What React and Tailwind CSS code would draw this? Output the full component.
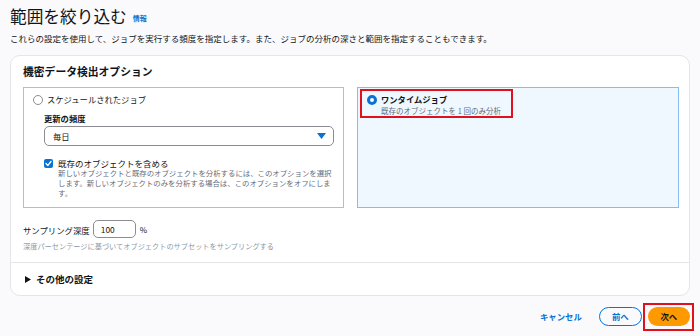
import React from "react";

const font = { fontFamily: '"Noto Sans CJK JP", "Noto Sans", sans-serif' };

export default function App() {
  return (
    <div
      className="w-[700px] h-[336px] overflow-hidden bg-[#fafafc] text-[#0f141a]"
      style={font}
    >
      {/* Header */}
      <div className="pl-[10px] h-[33px] flex items-center">
        <span className="text-[16.7px] leading-none">範囲を絞り込む</span>
        <span className="ml-[6px] mt-[4px] text-[7px] font-bold text-[#0972d3]">情報</span>
      </div>
      <div className="pl-[10px] h-[10px] leading-[10px] text-[8.5px] text-[#0f141a] whitespace-nowrap">
        これらの設定を使用して、ジョブを実行する頻度を指定します。また、ジョブの分析の深さと範囲を指定することもできます。
      </div>

      {/* Card */}
      <div className="mt-[12px] ml-[10px] w-[680px] h-[241px] rounded-[10px] border border-[#e4e4e9] bg-white">
        <div className="h-[31px] flex items-center pl-[12px] text-[10.8px] font-bold">
          機密データ検出オプション
        </div>

        <div className="flex pl-[12px] gap-[13px]">
          {/* Left option */}
          <div className="w-[321px] h-[121px] border border-[#b8bcc4] bg-white pl-[9px] pt-[6px]">
            <div className="h-[11px] flex items-center">
              <span className="w-[10px] h-[10px] rounded-full border border-[#8c8c94] bg-white" />
              <span className="ml-[4px] text-[8.3px] text-[#0f141a]">スケジュールされたジョブ</span>
            </div>
            <div className="ml-[11px]">
              <div className="mt-[8px] h-[11px] flex items-center text-[8.3px] font-bold">更新の頻度</div>
              <div className="mt-[2px] w-[290px] h-[20px] rounded-[5px] border border-[#8c8c94] flex items-center justify-between pl-[8px] pr-[7px]">
                <span className="text-[8.3px]">毎日</span>
                <svg width="9" height="6" viewBox="0 0 9 6">
                  <path d="M0 0 L9 0 L4.5 6 Z" fill="#0972d3" />
                </svg>
              </div>
              <div className="mt-[12px] flex">
                <span className="mt-[0.5px] w-[9px] h-[9px] rounded-[2px] bg-[#0972d3] flex items-center justify-center">
                  <svg width="7" height="7" viewBox="0 0 7 7">
                    <path d="M1 3.6 L2.9 5.4 L6 1.5" stroke="white" strokeWidth="1.4" fill="none" strokeLinecap="round" strokeLinejoin="round" />
                  </svg>
                </span>
                <div className="ml-[5px]">
                  <div className="h-[10px] leading-[10px] text-[8.5px]">既存のオブジェクトを含める</div>
                  <div className="text-[7.4px] leading-[10px] text-[#5f6b7a] whitespace-nowrap">
                    <div>新しいオブジェクトと既存のオブジェクトを分析するには、このオプションを選択</div>
                    <div>します。新しいオブジェクトのみを分析する場合は、このオプションをオフにしま</div>
                    <div>す。</div>
                  </div>
                </div>
              </div>
            </div>
          </div>

          {/* Right option */}
          <div className="relative w-[322px] h-[121px] border border-[#85bdf0] bg-[#f0f8ff] pl-[9px] pt-[6px]">
            <div className="h-[11px] flex items-center">
              <span className="w-[10px] h-[10px] rounded-full border-[3px] border-[#0972d3] bg-white" />
              <span className="ml-[4px] text-[8.3px] font-bold">ワンタイムジョブ</span>
            </div>
            <div className="ml-[14px] h-[11px] leading-[11px] text-[7.5px] text-[#5f6b7a]">
              既存のオブジェクトを 1 回のみ分析
            </div>
            <div className="absolute left-[2px] top-[1px] w-[153px] h-[29px] border-2 border-[#e0111d]" />
          </div>
        </div>

        {/* Sampling */}
        <div className="mt-[12px] pl-[12px] h-[18px] flex items-center">
          <span className="text-[8.4px] mt-[2px]">サンプリング深度</span>
          <div className="ml-[3px] w-[43px] h-[18px] rounded-[5px] border border-[#8c8c94] flex items-center pl-[7px] text-[8.4px]">
            100
          </div>
          <span className="ml-[4px] mt-[2px] text-[8px]">%</span>
        </div>
        <div className="mt-[3px] pl-[12px] h-[10px] leading-[10px] text-[7.2px] text-[#8d99a8] whitespace-nowrap">
          深度パーセンテージに基づいてオブジェクトのサブセットをサンプリングする
        </div>
        <div className="mt-[11px] border-t border-[#e4e4e9]" />
        <div className="h-[32px] flex items-center pl-[14px]">
          <svg width="6" height="7" viewBox="0 0 6 7">
            <path d="M0 0 L6 3.5 L0 7 Z" fill="#0f141a" />
          </svg>
          <span className="ml-[5px] text-[9.5px] font-bold">その他の設定</span>
        </div>
      </div>

      {/* Footer buttons */}
      <div className="mt-[11px] flex items-center h-[19px] pl-[540px]">
        <span className="text-[8.4px] font-bold text-[#0972d3]">キャンセル</span>
        <div className="ml-[17px] w-[43px] h-[19px] rounded-full border-[1.5px] border-[#0972d3] flex items-center justify-center text-[8.4px] font-bold text-[#0972d3]">
          前へ
        </div>
        <div className="relative ml-[6px] w-[42px] h-[19px] rounded-full bg-[#ff9900] flex items-center justify-center text-[8.4px] font-bold text-[#0f141a]">
          次へ
          <div className="absolute left-[-5px] top-[-4px] w-[51px] h-[28px] border-2 border-[#e0111d]" />
        </div>
      </div>
    </div>
  );
}
